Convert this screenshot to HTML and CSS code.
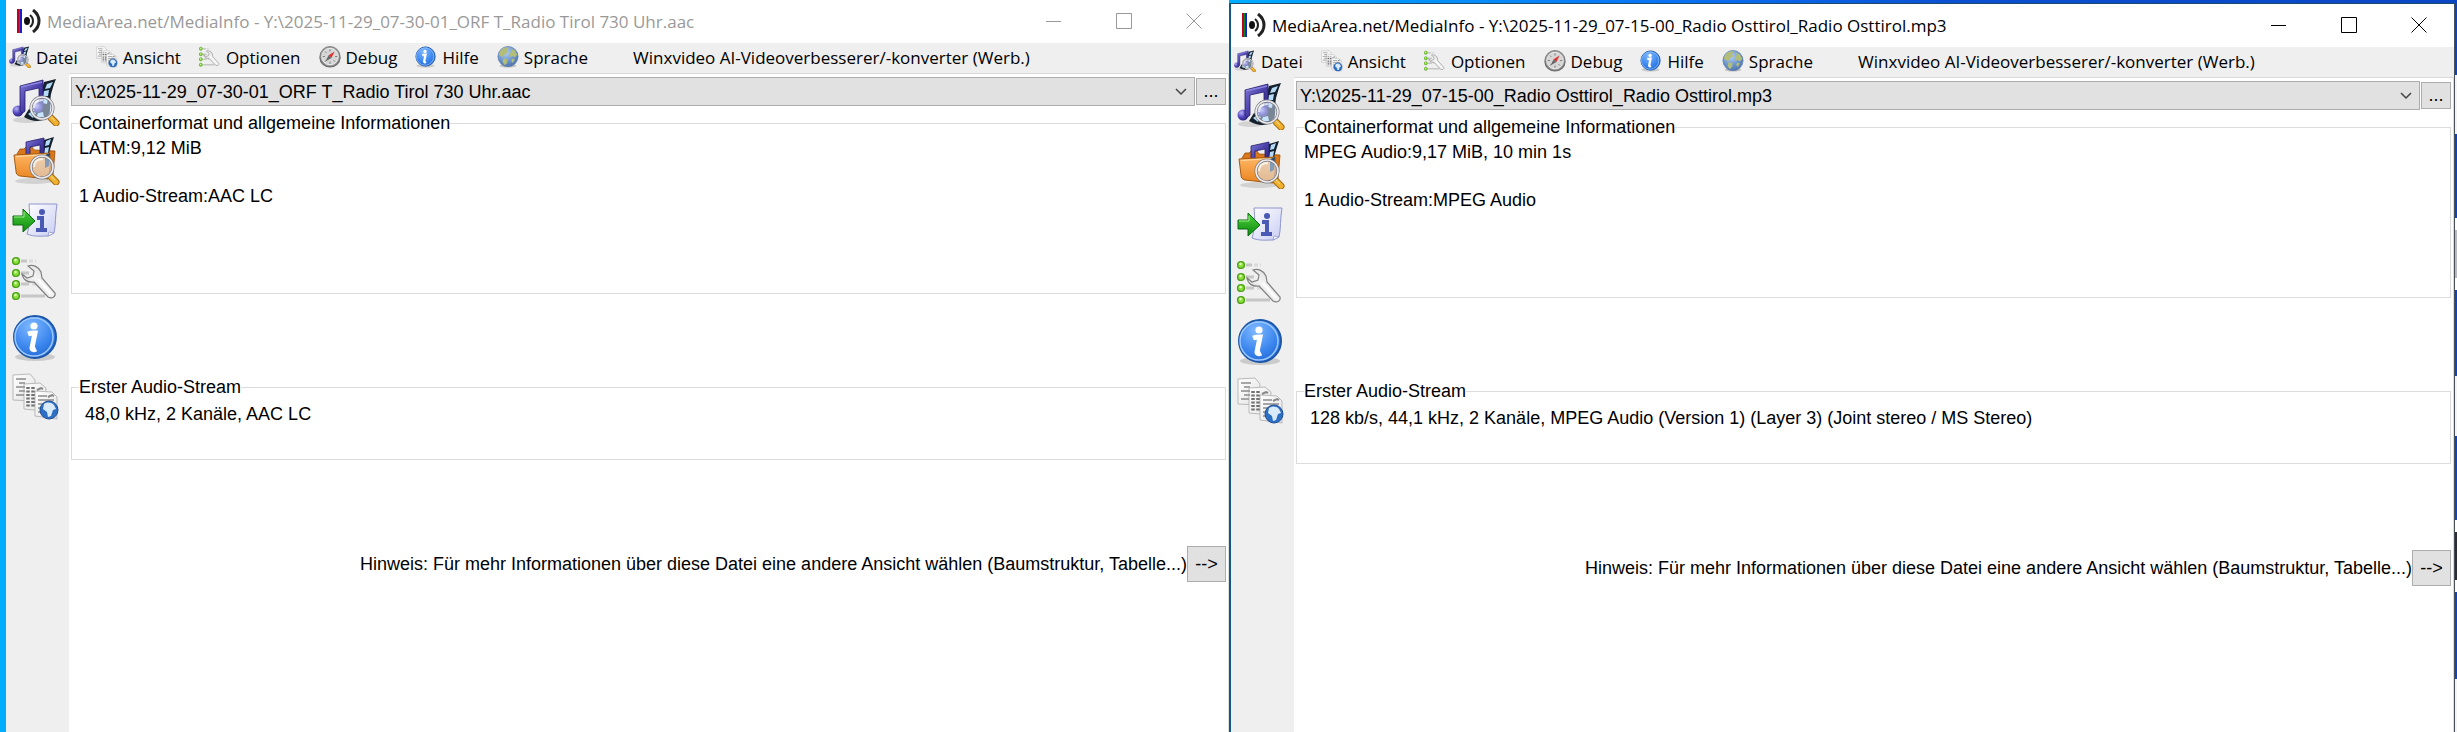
FILE: index.html
```html
<!DOCTYPE html>
<html lang="de">

<head>
    <meta charset="UTF-8">
    <meta name="viewport" content="width=device-width, initial-scale=1.0">
    <title>MediaInfo</title>
    <link rel="stylesheet" href="styles.css">
</head>

<body>
    <!-- shared icons -->
    <svg class="sprite" aria-hidden="true">
        <defs>
            <linearGradient id="gNote" x1="0" y1="0" x2="1" y2="1">
                <stop offset="0" stop-color="#8078d8"/><stop offset="0.5" stop-color="#4a40a8"/><stop offset="1" stop-color="#2c2478"/>
            </linearGradient>
            <radialGradient id="gHead" cx="0.35" cy="0.3" r="0.8">
                <stop offset="0" stop-color="#b4b0f4"/><stop offset="0.5" stop-color="#5548c0"/><stop offset="1" stop-color="#241c70"/>
            </radialGradient>
            <linearGradient id="gFolder" x1="0" y1="0" x2="0" y2="1">
                <stop offset="0" stop-color="#ffb765"/><stop offset="1" stop-color="#e98420"/>
            </linearGradient>
            <linearGradient id="gArrow" x1="0" y1="0" x2="0" y2="1">
                <stop offset="0" stop-color="#4fd040"/><stop offset="1" stop-color="#0c8a0c"/>
            </linearGradient>
            <linearGradient id="gPage" x1="0" y1="0" x2="1" y2="1">
                <stop offset="0" stop-color="#ffffff"/><stop offset="1" stop-color="#c9cdf3"/>
            </linearGradient>
            <linearGradient id="gDoc" x1="0" y1="0" x2="1" y2="1">
                <stop offset="0" stop-color="#ffffff"/><stop offset="1" stop-color="#e2e2e2"/>
            </linearGradient>
            <radialGradient id="gBlue" cx="0.4" cy="0.25" r="0.85">
                <stop offset="0" stop-color="#7fb8ff"/><stop offset="0.6" stop-color="#3a86ee"/><stop offset="1" stop-color="#1f62cc"/>
            </radialGradient>
            <linearGradient id="gSteel" x1="0" y1="1" x2="1" y2="0">
                <stop offset="0" stop-color="#b8b8b8"/><stop offset="0.5" stop-color="#f4f4f4"/><stop offset="1" stop-color="#cfcfcf"/>
            </linearGradient>
            <radialGradient id="gGlobe" cx="0.4" cy="0.3" r="0.8">
                <stop offset="0" stop-color="#b4d0f2"/><stop offset="0.6" stop-color="#6890c8"/><stop offset="1" stop-color="#456aa4"/>
            </radialGradient>
        </defs>

        <symbol id="i-app" viewBox="0 0 24 24">
            <path fill="#c00020" d="M0 0h2v24H0z"/>
            <path fill="#008a28" d="M2 0h1v24H2z"/>
            <path fill="#1820c8" d="M3 0h2v24H3z"/>
            <ellipse cx="10" cy="12" rx="3" ry="4" fill="#111"/>
            <path d="M13 6c4 3 4 9 0 12" fill="none" stroke="#222" stroke-width="2"/>
            <path d="M16 1c8 6 8 16 0 22" fill="none" stroke="#222" stroke-width="3"/>
        </symbol>

        <symbol id="i-lens" viewBox="0 0 48 48">
            <path d="M36 37l3 3" stroke="#8b8b90" stroke-width="4"/>
            <path d="M39 40l5 5" stroke="#a26a10" stroke-width="7" stroke-linecap="round"/>
            <path d="M39 40l5 5" stroke="#f0b030" stroke-width="5" stroke-linecap="round"/>
            <path d="M39 39l4 4" stroke="#ffe08a" stroke-width="1"/>
            <circle cx="30" cy="30" r="11" fill="#dcecff" fill-opacity="0.5" stroke="#77777c" stroke-width="3"/>
            <circle cx="30" cy="30" r="11" fill="none" stroke="#ececf0" stroke-width="1.6"/>
            <path d="M22 30c0-6 4-8 9-8" fill="none" stroke="#fff" stroke-width="2" stroke-opacity="0.7"/>
        </symbol>

        <symbol id="i-file" viewBox="0 0 48 48">
            <ellipse cx="14" cy="42" rx="13" ry="3" fill="#000" fill-opacity="0.12"/>
            <path d="M32 4l12-3-2 5-3 10c-2 12 2 24-8 26-6 2-12 1-19-3l5-8c5 3 9 3 12 1 4-8-1-18 3-28z" fill="#15202c"/>
            <path d="M35 6l6-2-3 6-5 1zM32 13l5-1-1 6h-5zM31 20l5 0-1 6-5-1zM16 36l4-3 4 2-3 5zM24 40l2-5 5-1 1 5z" fill="#b4dcf8"/>
            <circle cx="6" cy="33" r="5.5" fill="url(#gHead)"/>
            <path d="M8 8L31 2v27c-2 4-8 4-9 0 0-3 3-5 5-4V10l-14 3v20c-1 2-4 2-5 0z" fill="url(#gNote)" stroke="#251d6c" stroke-width="0.8"/>
            <path d="M9 9l21-5" stroke="#8a84de" stroke-width="1.4"/>
            <circle cx="26" cy="30" r="5" fill="url(#gHead)"/>
            <use href="#i-lens"/>
        </symbol>

        <symbol id="i-folder" viewBox="0 0 48 48">
            <ellipse cx="22" cy="44" rx="19" ry="3" fill="#000" fill-opacity="0.12"/>
            <path d="M5 17l3-5h4l2-2h6l2 3 21 1-2 24H8z" fill="#d9771a" stroke="#9a4d08" stroke-width="0.8"/>
            <path d="M32 3l10-3-2 6-3 10v14h-6z" fill="#15202c"/>
            <path d="M34 4l5-2-2 6-4 1zM33 11l4-1-1 6h-4z" fill="#b4dcf8"/>
            <path d="M14 5l18-4v20h-4V8l-10 2v11h-4z" fill="url(#gNote)" stroke="#251d6c" stroke-width="0.8"/>
            <path d="M2 18l36-2c1 9 0 18-2 26l-28-3c-3-1-4-2-4-5z" fill="url(#gFolder)" stroke="#a65a10" stroke-width="1"/>
            <path d="M4 19.500l32-2" stroke="#ffdba8" stroke-width="1"/>
            <path d="M33 18l5-2-1 13-4 2z" fill="#24486e"/>
            <use href="#i-lens"/>
        </symbol>

        <symbol id="i-export" viewBox="0 0 48 48">
            <path d="M17 8h28c-2 11-1 21-3 29l-6 3c-7 0-14 1-21-2 3-9 3-20 2-30z" fill="url(#gPage)" stroke="#8f96cc" stroke-width="1"/>
            <path d="M42 37l-6 3 1-4z" fill="#fff" stroke="#8f96cc" stroke-width="0.8"/>
            <circle cx="30" cy="16" r="3" fill="#4a5ab4"/>
            <path d="M25 22h5v11M24 34h11" fill="none" stroke="#4a5ab4" stroke-width="4"/>
            <path d="M1 20h10v-7l12 12-12 11v-7H1z" fill="url(#gArrow)" stroke="#0a6a10" stroke-width="1"/>
            <path d="M2 21h10v-5" fill="none" stroke="#9af088" stroke-width="1"/>
        </symbol>

        <symbol id="i-options" viewBox="0 0 48 48">
            <path d="M9 6h6M9 18h8M9 29h8M9 41h24" stroke="#c6c6c6" stroke-width="3"/>
            <path d="M17 6h7M20 29h7" stroke="#dadada" stroke-width="3" stroke-dasharray="4 2"/>
            <g fill="#8be03c" stroke="#4da018" stroke-width="1.400">
                <circle cx="4" cy="6" r="3.400"/><circle cx="4" cy="18" r="3.400"/><circle cx="4" cy="29" r="3.400"/><circle cx="4" cy="41" r="3.400"/>
            </g>
            <g fill="#e2ffc0">
                <circle cx="3.500" cy="5" r="1.200"/><circle cx="3.500" cy="17" r="1.200"/><circle cx="3.500" cy="28" r="1.200"/><circle cx="3.500" cy="40" r="1.200"/>
            </g>
            <path d="M16 11c5-2 11 1 13 6l1 6 13 15c1 4-3 6-7 4L22 27c-6 1-11-2-12-8l5 4 6-2 1-5z" fill="url(#gSteel)" stroke="#808080" stroke-width="1.200"/>
            <path d="M26 24l13 15" stroke="#fff" stroke-width="2"/>
        </symbol>

        <symbol id="i-info" viewBox="0 0 48 48">
            <ellipse cx="23" cy="43" rx="20" ry="4" fill="#000" fill-opacity="0.15"/>
            <circle cx="23" cy="23" r="21" fill="url(#gBlue)" stroke="#1c57a8" stroke-width="2"/>
            <circle cx="22" cy="23" r="19" fill="none" stroke="#9cc8ff" stroke-width="1.500"/>
            <circle cx="22" cy="12" r="3.600" fill="#fff"/>
            <path d="M16 20c3-1 5-1 7-1l-3 15c0 2 2 2 4 1" fill="none" stroke="#fff" stroke-width="5"/>
        </symbol>

        <symbol id="i-view" viewBox="0 0 48 48">
            <g fill="url(#gDoc)" stroke="#b9b9b9" stroke-width="1">
                <path d="M1 2l17-1 5 6-1 21-21-1z"/>
                <path d="M12 11l16-1 6 5-1 23-21-2z"/>
                <path d="M23 18l17 1 5 5v22l-22-3z"/>
            </g>
            <path d="M4 6h10M7 10h6M4 14h9M7 18h6M4 22h8" stroke="#8c8c8c" stroke-width="1.500"/>
            <path d="M16 14v20M21 14v20" stroke="#707070" stroke-width="3.500" stroke-dasharray="2 1.500"/>
            <path d="M25 17l4-2 2 1" fill="none" stroke="#888" stroke-width="2"/>
            <path d="M26 23h9M26 27h16M26 31h8M26 35h5M26 39h5" stroke="#8c8c8c" stroke-width="1.500"/>
            <path d="M36 24l4-2 2 1" fill="none" stroke="#888" stroke-width="2"/>
            <circle cx="37" cy="37" r="9" fill="#2c6fc4" stroke="#1d4f96" stroke-width="1"/>
            <path d="M32 31c3-2 7-2 10 1l2 4-3 1-2 6-3 1-1-5-4-3z" fill="#d9eaf8"/>
        </symbol>

        <symbol id="i-debug" viewBox="0 0 48 48">
            <ellipse cx="24" cy="26" rx="23" ry="21" fill="#707070"/>
            <circle cx="24" cy="23" r="22" fill="#9c9c9c" stroke="#686868" stroke-width="1.500"/>
            <circle cx="24" cy="23" r="18" fill="#d6d6d6" stroke="#efefef" stroke-width="2"/>
            <path d="M24 7v5M24 34v5M8 23h5M35 23h5M13 12l3 3M35 34l-3-3M13 34l3-3" stroke="#777" stroke-width="2"/>
            <path d="M34 12L27 26l-6-6z" fill="#e03030"/>
            <path d="M14 34l7-14 6 6z" fill="#666"/>
        </symbol>

        <symbol id="i-globe" viewBox="0 0 48 48">
            <ellipse cx="24" cy="43" rx="18" ry="4" fill="#000" fill-opacity="0.2"/>
            <circle cx="24" cy="23" r="22" fill="url(#gGlobe)" stroke="#5a7cab" stroke-width="1.500"/>
            <path d="M8 10c5-6 12-8 17-7l-3 6 2 5-7 4-3 6-8-3-2-4zM14 27l9 2-1 8-5 5-5-7zM31 6l8 4 5 9-5 6-5-3-5 2-1-8 4-4zM33 28l6 1-4 8-4-4z" fill="#b2bd78"/>
        </symbol>

        <symbol id="i-min" viewBox="0 0 16 16"><path d="M0 8.500h15" stroke="currentColor"/></symbol>
        <symbol id="i-max" viewBox="0 0 16 16"><path d="M0.500 0.500h15v15h-15z" fill="none" stroke="currentColor"/></symbol>
        <symbol id="i-close" viewBox="0 0 16 16"><path d="M0.500 0.500l15 15M15.500 0.500l-15 15" stroke="currentColor"/></symbol>
    </svg>

    <section class="window inactive">
        <header class="titlebar">
            <svg class="app-icon"><use href="#i-app"/></svg>
            <h1>MediaArea.net/MediaInfo - Y:\2025-11-29_07-30-01_ORF T_Radio Tirol 730 Uhr.aac</h1>
            <button type="button" class="win-btn" aria-label="Minimieren"><svg><use href="#i-min"/></svg></button>
            <button type="button" class="win-btn" aria-label="Maximieren"><svg><use href="#i-max"/></svg></button>
            <button type="button" class="win-btn" aria-label="Schließen"><svg><use href="#i-close"/></svg></button>
        </header>
        <nav class="menu">
            <button type="button"><svg><use href="#i-file"/></svg>Datei</button>
            <button type="button"><svg><use href="#i-view"/></svg>Ansicht</button>
            <button type="button"><svg><use href="#i-options"/></svg>Optionen</button>
            <button type="button"><svg><use href="#i-debug"/></svg>Debug</button>
            <button type="button"><svg><use href="#i-info"/></svg>Hilfe</button>
            <button type="button"><svg><use href="#i-globe"/></svg>Sprache</button>
            <button type="button"><svg></svg>Winxvideo AI-Videoverbesserer/-konverter (Werb.)</button>
        </nav>
        <div class="body">
            <div class="toolbar">
                <button type="button" aria-label="Datei öffnen"><svg><use href="#i-file"/></svg></button>
                <button type="button" aria-label="Ordner öffnen"><svg><use href="#i-folder"/></svg></button>
                <button type="button" aria-label="Exportieren"><svg><use href="#i-export"/></svg></button>
                <button type="button" aria-label="Optionen"><svg><use href="#i-options"/></svg></button>
                <button type="button" aria-label="Info"><svg><use href="#i-info"/></svg></button>
                <button type="button" aria-label="Ansicht"><svg><use href="#i-view"/></svg></button>
            </div>
            <main class="content">
                <div class="file-row">
                    <div class="combo">
                        <select id="file1" aria-label="Datei">
                            <option>Y:\2025-11-29_07-30-01_ORF T_Radio Tirol 730 Uhr.aac</option>
                        </select>
                        <svg class="chevron" viewBox="0 0 12 8"><path d="M1 1l5 5 5-5" fill="none" stroke="#444" stroke-width="1.500"/></svg>
                    </div>
                    <button type="button" class="btn more">...</button>
                </div>
                <fieldset class="general">
                    <legend>Containerformat und allgemeine Informationen</legend>
                    <p>LATM:9,12 MiB</p>
                    <p class="streams">1 Audio-Stream:AAC LC</p>
                </fieldset>
                <fieldset class="audio">
                    <legend>Erster Audio-Stream</legend>
                    <p>48,0 kHz, 2 Kanäle, AAC LC</p>
                </fieldset>
                <div class="hint">
                    <p>Hinweis: Für mehr Informationen über diese Datei eine andere Ansicht wählen (Baumstruktur, Tabelle...)</p>
                    <button type="button" class="btn next">--&gt;</button>
                </div>
            </main>
        </div>
    </section>

    <section class="window active">
        <header class="titlebar">
            <svg class="app-icon"><use href="#i-app"/></svg>
            <h1>MediaArea.net/MediaInfo - Y:\2025-11-29_07-15-00_Radio Osttirol_Radio Osttirol.mp3</h1>
            <button type="button" class="win-btn" aria-label="Minimieren"><svg><use href="#i-min"/></svg></button>
            <button type="button" class="win-btn" aria-label="Maximieren"><svg><use href="#i-max"/></svg></button>
            <button type="button" class="win-btn" aria-label="Schließen"><svg><use href="#i-close"/></svg></button>
        </header>
        <nav class="menu">
            <button type="button"><svg><use href="#i-file"/></svg>Datei</button>
            <button type="button"><svg><use href="#i-view"/></svg>Ansicht</button>
            <button type="button"><svg><use href="#i-options"/></svg>Optionen</button>
            <button type="button"><svg><use href="#i-debug"/></svg>Debug</button>
            <button type="button"><svg><use href="#i-info"/></svg>Hilfe</button>
            <button type="button"><svg><use href="#i-globe"/></svg>Sprache</button>
            <button type="button"><svg></svg>Winxvideo AI-Videoverbesserer/-konverter (Werb.)</button>
        </nav>
        <div class="body">
            <div class="toolbar">
                <button type="button" aria-label="Datei öffnen"><svg><use href="#i-file"/></svg></button>
                <button type="button" aria-label="Ordner öffnen"><svg><use href="#i-folder"/></svg></button>
                <button type="button" aria-label="Exportieren"><svg><use href="#i-export"/></svg></button>
                <button type="button" aria-label="Optionen"><svg><use href="#i-options"/></svg></button>
                <button type="button" aria-label="Info"><svg><use href="#i-info"/></svg></button>
                <button type="button" aria-label="Ansicht"><svg><use href="#i-view"/></svg></button>
            </div>
            <main class="content">
                <div class="file-row">
                    <div class="combo">
                        <select id="file2" aria-label="Datei">
                            <option>Y:\2025-11-29_07-15-00_Radio Osttirol_Radio Osttirol.mp3</option>
                        </select>
                        <svg class="chevron" viewBox="0 0 12 8"><path d="M1 1l5 5 5-5" fill="none" stroke="#444" stroke-width="1.500"/></svg>
                    </div>
                    <button type="button" class="btn more">...</button>
                </div>
                <fieldset class="general">
                    <legend>Containerformat und allgemeine Informationen</legend>
                    <p>MPEG Audio:9,17 MiB, 10 min 1s</p>
                    <p class="streams">1 Audio-Stream:MPEG Audio</p>
                </fieldset>
                <fieldset class="audio">
                    <legend>Erster Audio-Stream</legend>
                    <p>128 kb/s, 44,1 kHz, 2 Kanäle, MPEG Audio (Version 1) (Layer 3) (Joint stereo / MS Stereo)</p>
                </fieldset>
                <div class="hint">
                    <p>Hinweis: Für mehr Informationen über diese Datei eine andere Ansicht wählen (Baumstruktur, Tabelle...)</p>
                    <button type="button" class="btn next">--&gt;</button>
                </div>
            </main>
        </div>
    </section>
    <div class="desktop-edge"></div>
</body>

</html>
```
FILE: styles.css
```css
body {
    margin: 0;
    padding-left: 6px;
    min-height: 100vh;
    box-sizing: border-box;
    display: flex;
    font-family: "Liberation Sans", Arial, sans-serif;
    font-size: 18px;
    line-height: 24px;
    color: #000;
    background: linear-gradient(to right, #00adff 0, #00adff 50%, #0a72f4 68%, #0a4fd0 80%, #0a46c4 100%);
}

.sprite {
    position: absolute;
    width: 0;
    height: 0;
}

button {
    font: inherit;
    color: inherit;
    margin: 0;
    padding: 0;
    border: none;
    background: none;
}

p {
    margin: 0;
}

.window {
    flex: 1 1 0;
    min-width: 0;
    display: flex;
    flex-direction: column;
    background-color: #fff;
}

.window.active {
    margin-top: 3px;
    border-top: 1px solid #1c4a6e;
    border-left: 2px solid #16597f;
    border-right: 1px solid #4a5058;
}

/* title bar */
.titlebar {
    display: flex;
    align-items: center;
    height: 43px;
    padding-left: 11px;
}

.app-icon {
    width: 24px;
    height: 24px;
    margin: 0 6px 2px 0;
}

.titlebar h1 {
    flex: 1;
    margin: 0;
    font-family: "Open Sans", "Segoe UI", sans-serif;
    font-size: 17px;
    font-weight: 400;
    white-space: nowrap;
}

.inactive .titlebar {
    color: #999;
}

.win-btn {
    width: 70px;
    height: 40px;
    margin-bottom: 2px;
}

.win-btn svg {
    display: block;
    width: 16px;
    height: 16px;
    margin: 0 auto;
}

/* menu */
.menu {
    display: flex;
    gap: 18px;
    height: 30px;
    padding-left: 3px;
    background-color: #efefef;
    font-family: "Open Sans", "Segoe UI", sans-serif;
    font-size: 17px;
}

.menu button {
    display: flex;
    align-items: center;
    gap: 5px;
    white-space: nowrap;
}

.menu svg {
    width: 22px;
    height: 24px;
    margin-bottom: 2px;
}

.body {
    flex: 1;
    display: flex;
}

.toolbar {
    display: flex;
    flex-direction: column;
    gap: 11px;
    width: 57px;
    padding: 5px 0 0 6px;
    background-color: #efefef;
}

.toolbar svg {
    display: block;
    width: 48px;
    height: 48px;
}

.content {
    flex: 1;
    min-width: 0;
    padding: 3px 2px 0 2px;
    border-top: 1px solid #d9d9d9;
    border-right: 1px solid #dcdcdc;
}

.file-row {
    display: flex;
    align-items: center;
    gap: 1px;
}

.combo {
    flex: 1;
    position: relative;
}

.combo select {
    display: block;
    appearance: none;
    width: 100%;
    height: 29px;
    padding: 0 0 0 3px;
    border: 1px solid #adadad;
    border-radius: 0;
    background-color: #e1e1e1;
    font: inherit;
    color: inherit;
}

.chevron {
    position: absolute;
    top: 11px;
    right: 8px;
    width: 12px;
    height: 8px;
}

.btn {
    border: 1px solid #adadad;
    background-color: #e1e1e1;
}

.more {
    width: 30px;
    height: 27px;
    line-height: 25px;
}

/* info boxes */
fieldset {
    box-sizing: border-box;
    margin: 0;
    border: 1px solid #dcdcdc;
    padding: 1px 7px;
}

legend {
    padding: 0;
}

.general {
    min-height: 183px;
    margin-top: 5px;
}

.streams {
    margin-top: 24px;
}

.audio {
    min-height: 85px;
    margin-top: 81px;
    padding: 3px 13px;
}

.audio legend {
    margin-left: -6px;
}

.hint {
    display: flex;
    justify-content: flex-end;
    align-items: center;
    margin-top: 86px;
}

.next {
    width: 39px;
    height: 36px;
}

/* what shows of the desktop right of the windows */
.desktop-edge {
    width: 2px;
    background: linear-gradient(to bottom,
        #0a46c4 0, #0a46c4 75px, #f4f4f4 75px, #f4f4f4 134px,
        #0a46c4 134px, #0a46c4 218px, #fff 218px, #fff 230px,
        #b8b8c0 230px, #b8b8c0 278px, #fff 278px, #fff 290px,
        #0a46c4 290px, #0a46c4 376px, #f4f4f4 376px, #f4f4f4 436px,
        #0a46c4 436px, #0a46c4 520px, #fff 520px, #fff 532px,
        #2c2c34 532px, #2c2c34 580px, #fff 580px, #fff 592px,
        #0a46c4 592px, #0a46c4 679px, #f4f4f4 679px);
}
```
